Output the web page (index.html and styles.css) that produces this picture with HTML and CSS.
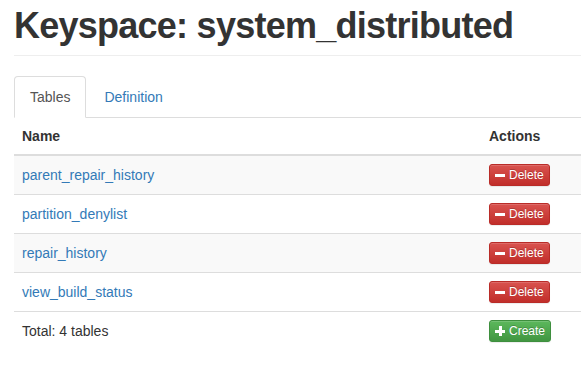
FILE: index.html
```html
<!DOCTYPE html>
<html lang="en">
<head>
    <meta charset="UTF-8">
    <title>Keyspace: system_distributed</title>
    <link rel="stylesheet" href="styles.css">
</head>
<body>
    <div class="page">
        <h1 class="page-header">Keyspace: system_distributed</h1>

        <ul class="nav-tabs">
            <li class="active"><a href="#">Tables</a></li>
            <li><a href="#">Definition</a></li>
        </ul>

        <table class="tables">
            <thead>
                <tr>
                    <th>Name</th>
                    <th class="col-actions">Actions</th>
                </tr>
            </thead>
            <tbody>
                <tr>
                    <td><a href="#">parent_repair_history</a></td>
                    <td><button class="btn btn-danger"><span class="icon-minus"></span>Delete</button></td>
                </tr>
                <tr>
                    <td><a href="#">partition_denylist</a></td>
                    <td><button class="btn btn-danger"><span class="icon-minus"></span>Delete</button></td>
                </tr>
                <tr>
                    <td><a href="#">repair_history</a></td>
                    <td><button class="btn btn-danger"><span class="icon-minus"></span>Delete</button></td>
                </tr>
                <tr>
                    <td><a href="#">view_build_status</a></td>
                    <td><button class="btn btn-danger"><span class="icon-minus"></span>Delete</button></td>
                </tr>
            </tbody>
            <tfoot>
                <tr>
                    <td>Total: 4 tables</td>
                    <td><button class="btn btn-success"><span class="icon-plus"></span>Create</button></td>
                </tr>
            </tfoot>
        </table>
    </div>
</body>
</html>
```

FILE: styles.css
```css
body {
    margin: 0;
    font-family: "Liberation Sans", Arial, sans-serif;
    font-size: 14px;
    line-height: 20px;
    color: #333;
    background: #fff;
}

a {
    color: #337ab7;
    text-decoration: none;
}

.page {
    width: 567px;
    padding: 0 4px 0 14px;
}

.page-header {
    margin: 0;
    padding: 6px 0 9px;
    font-size: 36px;
    line-height: 1.1;
    font-weight: bold;
    letter-spacing: -0.75px;
    color: #333;
    border-bottom: 1px solid #eee;
}

.nav-tabs {
    display: flex;
    list-style: none;
    margin: 20px 0 0;
    padding: 0;
    border-bottom: 1px solid #ddd;
}

.nav-tabs li {
    margin-bottom: -1px;
    margin-right: 2px;
}

.nav-tabs a {
    display: block;
    padding: 10px 15px;
    border: 1px solid transparent;
    border-radius: 4px 4px 0 0;
}

.nav-tabs .active a {
    color: #555;
    background: #fff;
    border-color: #ddd #ddd transparent;
}

.tables {
    width: 100%;
    border-collapse: collapse;
}

.tables th,
.tables td {
    padding: 8px;
    text-align: left;
    vertical-align: middle;
    line-height: 20px;
}

.tables th {
    font-weight: bold;
    border-bottom: 2px solid #ddd;
}

.tables td {
    border-top: 1px solid #ddd;
}

.tables tbody tr:nth-child(odd) td {
    background: #f9f9f9;
}

.col-actions {
    width: 84px;
}

.btn {
    display: inline-flex;
    align-items: center;
    height: 22px;
    padding: 0 5px;
    font-family: inherit;
    font-size: 12px;
    line-height: 18px;
    color: #fff;
    border: 1px solid;
    border-radius: 3px;
    text-shadow: 0 -1px 0 rgba(0, 0, 0, 0.2);
    box-shadow: inset 0 1px 0 rgba(255, 255, 255, 0.15), 0 1px 1px rgba(0, 0, 0, 0.075);
    cursor: pointer;
}

.btn-danger {
    background: linear-gradient(to bottom, #d9534f 0, #c12e2a 100%);
    border-color: #b92c28;
}

.btn-success {
    background: linear-gradient(to bottom, #5cb85c 0, #419641 100%);
    border-color: #3e8f3e;
}

.icon-minus,
.icon-plus {
    position: relative;
    display: inline-block;
    width: 10px;
    height: 10px;
    margin-right: 4px;
}

.icon-minus::before,
.icon-plus::before,
.icon-plus::after {
    content: "";
    position: absolute;
    background: #fff;
}

.icon-minus::before,
.icon-plus::before {
    left: 0;
    right: 0;
    top: 4px;
    height: 3px;
}

.icon-plus::after {
    top: 0;
    bottom: 0;
    left: 3.5px;
    width: 3px;
}
```
